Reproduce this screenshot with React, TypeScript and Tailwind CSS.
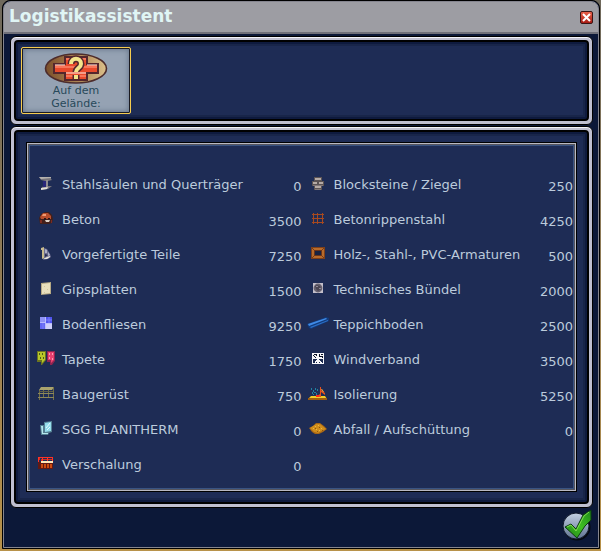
import type { ReactNode } from "react";

interface Material {
  name: string;
  amount: number;
  icon: ReactNode;
}

// even width and odd height keep the sprite on whole pixels inside its cell
function Sprite({ w, h, children }: { w: number; h: number; children: ReactNode }) {
  const width = w + (w % 2);
  const height = h + ((h + 1) % 2);
  return (
    <svg
      width={width}
      height={height}
      viewBox={`0 0 ${width} ${height}`}
      className="mx-auto block"
      aria-hidden="true"
    >
      {children}
    </svg>
  );
}

/* ─── Material icons ────────────────────────────────────────────────────── */
const BeamIcon = (
  <Sprite w={13} h={13}>
    <path d="M0 0h12v2l1 1-4 1v5h4l-4 3-7 1 1-3 3-1V4L2 3z" fill="#77747a" />
    <path d="M0 0h12v1l-10 1z" fill="#b5b2ae" />
    <path d="M4 4h3v6H4z" fill="#29277a" />
    <path d="M7 3h2v7H7z" fill="#8f8d90" />
    <path d="M2 11l7-1-1 2-6 1z" fill="#e4e1da" />
  </Sprite>
);

const ConcreteIcon = (
  <Sprite w={14} h={12}>
    <path d="M0 6l2-4 4-2h4l3 3 1 4-1 4-3 1H1z" fill="#42201c" />
    <path d="M1 5l3-4h5l3 3v3H2z" fill="#b94e2c" />
    <path d="M4 2h3v2H3z" fill="#f29a70" />
    <path d="M6 8h5l-1 2H7z" fill="#ded2c8" />
    <path d="M5 6h2v2H5zM9 6h2v1H9z" fill="#2b1718" />
    <path d="M1 8h2v3H1zM12 8h1v3h-1z" fill="#7d2b20" />
  </Sprite>
);

const PrefabIcon = (
  <Sprite w={10} h={13}>
    <path d="M0 1l3-1v11l-2 1V3L0 3z" fill="#c8ba8c" />
    <path d="M3 1l3 1 3 5 1 3-3 2-5 1 1-2z" fill="#6d6e90" />
    <path d="M4 2l2 1v3L4 6zM7 5l2 3-2 1z" fill="#aeb0c8" />
    <path d="M2 12l4-2 3-1v1l-3 2z" fill="#e6e2d8" />
    <path d="M4 7l3 1-3 2z" fill="#252a4c" />
  </Sprite>
);

const PlasterIcon = (
  <Sprite w={10} h={13}>
    <path d="M0 1l10-1v12L0 13z" fill="#b7aa85" />
    <path d="M1 2l8-1v10l-8 1z" fill="#e8dfbd" />
    <path d="M3 4h1v1H3zM6 7h1v1H6zM3 10h1v1H3z" fill="#d2c69f" />
  </Sprite>
);

const TilesIcon = (
  <Sprite w={12} h={12}>
    <path d="M0 0h12v12H0z" fill="#b9bbff" />
    <path d="M0 0h5v5H0z" fill="#8f93f6" />
    <path d="M6 0h6v6H6z" fill="#5054ee" />
    <path d="M0 6h5v6H0z" fill="#6468f4" />
    <path d="M6 7h6v5H6z" fill="#cfd0fa" />
    <path d="M9 0v6M6 3h6M3 6v6" stroke="#7b7ff8" />
  </Sprite>
);

const WallpaperIcon = (
  <Sprite w={18} h={14}>
    <path d="M0 0h9v9l-4 5H4v-3H0z" fill="#6b7420" />
    <path d="M10 0h8v10l-3 4h-2v-3h-3z" fill="#8f2450" />
    <path d="M1 1h7v8l-3 3V9H1z" fill="#b8c72a" />
    <path d="M11 1h6v8l-3 3V9h-3z" fill="#e8406f" />
    <path d="M2 2h1v2H2zM5 2h1v2H5zM3 6h1v2H3zM6 6h1v2H6z" fill="#4f5a1c" />
    <path d="M12 2h1v2h-1zM15 2h1v2h-1zM12 6h1v2h-1zM15 7h1v2h-1z" fill="#ff9ab5" />
  </Sprite>
);

const ScaffoldIcon = (
  <Sprite w={16} h={13}>
    <path d="M3 0h13l-2 3H1z" fill="#aaa36d" />
    <path d="M1 3h1v10H1zM5 3h1v8H5zM10 3h1v8h-1zM15 0h1v13h-1z" fill="#747047" />
    <path d="M0 6h16v1H0zM0 10h16v1H0z" fill="#8d8859" />
    <path d="M1 4h14v1H1z" fill="#5f5d45" />
  </Sprite>
);

const GlassIcon = (
  <Sprite w={12} h={14}>
    <path d="M0 4h4V1l8-1v11l-3 1-1 2H1z" fill="#557f92" />
    <path d="M5 2l6-1v9l-6 1z" fill="#94ddec" />
    <path d="M1 5h2v7h5v1H2z" fill="#b6e8ee" />
    <path d="M6 7l4-5M7 9l3-3" stroke="#e6fbff" />
  </Sprite>
);

const FormworkIcon = (
  <Sprite w={15} h={12}>
    <path d="M0 5h15v7H0z" fill="#631912" />
    <path d="M0 0h15v1H0zM0 0h1v5H0zM4 0h1v4H4zM9 0h1v4H9zM14 0h1v5h-1z" fill="#ff3325" />
    <path d="M1 1h1v2H1zM3 2h1v2H3zM5 2h4v1H5zM10 2h4v1h-4z" fill="#d82a20" />
    <path d="M3 4h12v2H3z" fill="#ffe9bb" />
    <path d="M3 7h2v4H3zM6 7h2v4H6zM9 7h2v4H9zM12 7h2v4h-2z" fill="#cc4a10" />
  </Sprite>
);

const BlocksIcon = (
  <Sprite w={12} h={13}>
    <path d="M2 0h8v4h2v5h-2v4H2V9H0V4h2z" fill="#5b5354" />
    <path d="M3 1h6v2H3zM1 5h4v2H1zM7 5h4v2H7zM3 9h6v2H3z" fill="#b5aaa5" />
    <path d="M3 12h6v1H3zM1 8h10v1H1z" fill="#81777a" />
  </Sprite>
);

const RebarIcon = (
  <Sprite w={12} h={11}>
    <path
      d="M1 0h1v11H1zM5 0h1v11H5zM10 0h1v11h-1zM0 1h12v1H0zM0 5h12v1H0zM0 9h12v1H0z"
      fill="#a8491f"
      shapeRendering="crispEdges"
    />
  </Sprite>
);

const FrameIcon = (
  <Sprite w={14} h={12}>
    <path d="M0 0h14v12H0z" fill="#804018" />
    <path d="M1 1h12v10H1z" fill="#b86b2b" />
    <path d="M1 1l3 3M13 1l-3 3M1 11l3-3M13 11l-3-3" stroke="#773c18" />
    <path d="M3 3h8v6H3z" fill="#6c3519" />
    <path d="M4 4h6v4H4z" fill="#182342" />
  </Sprite>
);

const BundleIcon = (
  <Sprite w={10} h={10}>
    <path d="M0 0h10v10H0z" fill="#c3bfca" />
    <circle cx="5" cy="5" r="4.4" fill="#66616f" />
    <path d="M2 3l2-1 3 1 1 3-3 2-2-2z" fill="#4a4552" />
    <path d="M3 3h2v1H3zM6 5h2v1H6z" fill="#8f8998" />
  </Sprite>
);

const CarpetIcon = (
  <Sprite w={22} h={12}>
    <path d="M0 7L19 0l3 1v3L4 12l-2-1z" fill="#123a7b" />
    <path d="M1 7L19 1l1 1L2 9z" fill="#3f8ae6" />
    <path d="M3 10l18-7v1L4 11z" fill="#2d70c7" />
  </Sprite>
);

const WindowIcon = (
  <Sprite w={12} h={11}>
    <path d="M0 0h12v11H0z" fill="#f6f6fa" />
    <path
      d="M2 1h3v1H2zM4 2h1v1H4zM1 2h1v1H1zM2 3h1v1H2zM3 4h1v1H3zM7 1h1v3H7zM9 1h2v1H9zM8 3h2v1H8zM10 3h1v2h-1z"
      fill="#0c1226"
    />
    <path
      d="M1 6h4v1H1zM1 7h3v1H1zM1 8h2v2H1zM4 9h1v1H4zM7 6h4v1H7zM8 7h3v1H8zM7 9h1v1H7zM9 8h2v1H9zM10 9h1v1h-1z"
      fill="#1b294f"
    />
  </Sprite>
);

const InsulationIcon = (
  <Sprite w={19} h={13}>
    <path d="M3 9h14l2 3H0z" fill="#f0cc28" />
    <path d="M0 11h19v2H0z" fill="#9f5e0e" />
    <path
      d="M3 1h1v2H3zM5 3h1v2H5zM7 1h1v2H7zM9 2h1v2H9zM4 5h1v2H4zM6 5h2v1H6zM8 6h1v2H8zM5 7h1v1H5z"
      fill="#1f83a2"
    />
    <path d="M9 9l3-2V0h1v3l4 3v2l-4-3v5H9z" fill="#e8501e" />
    <path d="M13 2h1l2 3h-1z" fill="#ffb13a" />
    <path d="M8 8h3v2H8z" fill="#ff2a1a" />
  </Sprite>
);

const RubbleIcon = (
  <Sprite w={18} h={11}>
    <path d="M0 5l4-2 3-3h4l4 3 3 3-4 3-4 2H6L3 9z" fill="#a76615" />
    <path d="M1 5l6-4h4l6 5-4 2-4 2-4-1z" fill="#cf8d1c" />
    <path d="M6 3h1v1H6zM9 2h1v1H9zM12 5h1v1h-1zM7 6h1v1H7zM4 5h1v1H4zM10 7h1v1h-1z" fill="#efb83c" />
    <path d="M6 5h1v1H6zM10 4h1v1h-1zM8 8h1v1H8zM13 7h1v1h-1z" fill="#8c5510" />
  </Sprite>
);

const ROWS: [Material, Material?][] = [
  [
    { name: "Stahlsäulen und Querträger", amount: 0, icon: BeamIcon },
    { name: "Blocksteine / Ziegel", amount: 250, icon: BlocksIcon },
  ],
  [
    { name: "Beton", amount: 3500, icon: ConcreteIcon },
    { name: "Betonrippenstahl", amount: 4250, icon: RebarIcon },
  ],
  [
    { name: "Vorgefertigte Teile", amount: 7250, icon: PrefabIcon },
    { name: "Holz-, Stahl-, PVC-Armaturen", amount: 500, icon: FrameIcon },
  ],
  [
    { name: "Gipsplatten", amount: 1500, icon: PlasterIcon },
    { name: "Technisches Bündel", amount: 2000, icon: BundleIcon },
  ],
  [
    { name: "Bodenfliesen", amount: 9250, icon: TilesIcon },
    { name: "Teppichboden", amount: 2500, icon: CarpetIcon },
  ],
  [
    { name: "Tapete", amount: 1750, icon: WallpaperIcon },
    { name: "Windverband", amount: 3500, icon: WindowIcon },
  ],
  [
    { name: "Baugerüst", amount: 750, icon: ScaffoldIcon },
    { name: "Isolierung", amount: 5250, icon: InsulationIcon },
  ],
  [
    { name: "SGG PLANITHERM", amount: 0, icon: GlassIcon },
    { name: "Abfall / Aufschüttung", amount: 0, icon: RubbleIcon },
  ],
  [{ name: "Verschalung", amount: 0, icon: FormworkIcon }],
];

function MaterialCells({ item }: { item: Material }) {
  return (
    <>
      <td className="p-0 pb-[2px]">{item.icon}</td>
      <th scope="row" className="p-0 text-left font-normal whitespace-nowrap">
        {item.name}
      </th>
      <td className="p-0 pt-1 text-right">{item.amount}</td>
    </>
  );
}

/* ─── Metal frame round a panel ─────────────────────────────────────────── */
function Panel({ children }: { children: ReactNode }) {
  return (
    <section className="rounded-md border border-black bg-[#bfbfd0] p-[3px] shadow-[inset_0_1px_0_#f4f4fa]">
      <div className="rounded-sm border-2 border-black bg-[#1e2c55] shadow-[inset_0_0_0_2px_#0e1a3e,inset_0_0_0_4px_#182549]">
        {children}
      </div>
    </section>
  );
}

function SiteIcon() {
  return (
    <svg width="64" height="31" viewBox="0 0 64 31" aria-hidden="true">
      <defs>
        <linearGradient id="wood" x1="0" x2="1">
          <stop offset="0" stopColor="#7a4f2a" />
          <stop offset=".5" stopColor="#a98050" />
          <stop offset="1" stopColor="#dcc08a" />
        </linearGradient>
      </defs>
      <ellipse cx="32" cy="15.5" rx="30.5" ry="14.5" fill="url(#wood)" stroke="#4d2c2c" strokeWidth="1.6" />
      <path d="M21 4h22v7h11v9H43v7H21v-7H10v-9h11z" fill="#e84a2c" stroke="#54262c" strokeWidth="2" />
      <path d="M11 14h42M22 6h20M22 23h20" stroke="#f7765a" strokeWidth="2" />
      <path d="M11 12h10M43 12h10M22 20h20" stroke="#fff0e8" />
      <path
        d="M27 11c0-7 10-7 10 0 0 4-5 4-5 8M32 22v4"
        fill="none"
        stroke="#54262c"
        strokeWidth="7"
        strokeLinejoin="round"
      />
      <path d="M27 11c0-7 10-7 10 0 0 4-5 4-5 8M32 22v4" fill="none" stroke="#f3e48b" strokeWidth="4" />
    </svg>
  );
}

function ConfirmIcon() {
  return (
    <svg width="32" height="34" viewBox="0 0 32 34" className="block" aria-hidden="true">
      <defs>
        <linearGradient id="disc" x1="0" y1="0" x2="0" y2="1">
          <stop offset="0" stopColor="#c3d0e2" />
          <stop offset="1" stopColor="#5f7290" />
        </linearGradient>
        <linearGradient id="tick" x1="1" y1="0" x2="0" y2="1">
          <stop offset="0" stopColor="#1f8a1a" />
          <stop offset=".5" stopColor="#3fbf22" />
          <stop offset="1" stopColor="#1c7a16" />
        </linearGradient>
      </defs>
      <circle cx="15" cy="18" r="13.5" fill="#05090f" />
      <circle cx="14" cy="17" r="13" fill="url(#disc)" stroke="#10182a" />
      <path d="M3 18l6-3 5 5L21 6l8-5v10L23 17 15 29z" fill="url(#tick)" stroke="#0b3d0e" />
      <path d="M5 18l4-2 5 6 8-15 5-4" fill="none" stroke="#7fdc50" />
    </svg>
  );
}

export default function App() {
  return (
    <div className="min-h-screen bg-linear-to-b from-[#6f695c] to-[#b8924a] pr-px pb-[2px] pl-[2px] font-['DejaVu_Sans',sans-serif]">
      <main className="rounded-t-lg border border-black bg-[#0c1838]">
        <div className="rounded-t-lg border border-[#85858f]">
          <header className="flex h-8 items-center justify-between rounded-t-md border-b-2 border-[#707079] bg-[#9d9da3] px-[5px]">
            <h1 className="text-[17px] font-bold text-[#e0f5f5]">Logistikassistent</h1>
            <button
              type="button"
              aria-label="Schließen"
              className="flex size-[13px] items-center justify-center rounded-xs border border-[#3b1515] bg-linear-to-b from-[#e8604a] to-[#a81a14]"
            >
              <svg width="9" height="9" viewBox="0 0 9 9" aria-hidden="true">
                <path d="M1 1l7 7M8 1L1 8" stroke="#fff" strokeWidth="2" />
              </svg>
            </button>
          </header>

          <div className="pt-[2px] pr-[5px] pl-[6px]">
            <Panel>
              <div className="p-[5px]">
                <button
                  type="button"
                  className="flex h-[67px] w-[110px] flex-col items-center rounded-xs border border-[#f5cc4f] bg-[#95a2b3] pt-[5px] text-[11px] leading-[13px] text-[#28495a] shadow-[inset_0_0_0_1px_#1a1a20,inset_0_0_5px_2px_#6d7c90]"
                >
                  <SiteIcon />
                  <span>
                    Auf dem
                    <br />
                    Gelände:
                  </span>
                </button>
              </div>
            </Panel>

            <div className="mt-px">
              <Panel>
                <div className="p-[10px]">
                  <div className="border border-black bg-[#55555f]">
                    <div className="border border-[#b9b9c2] p-px">
                      <div className="border border-[#395382] bg-[#1e2c55] pt-[21px] pb-[6px]">
                        <table className="w-full table-fixed text-[13px] leading-4 text-[#bccbdc]">
                          <colgroup>
                            <col className="w-8" />
                            <col />
                            <col className="w-10" />
                            <col className="w-8" />
                            <col />
                            <col className="w-10" />
                          </colgroup>
                          <tbody>
                            {ROWS.map(([left, right]) => (
                              <tr key={left.name} className="h-[35px]">
                                <MaterialCells item={left} />
                                {right && <MaterialCells item={right} />}
                              </tr>
                            ))}
                          </tbody>
                        </table>
                      </div>
                    </div>
                  </div>
                </div>
              </Panel>
            </div>
          </div>

          <footer className="flex justify-end px-1 pt-px pb-1">
            <button type="button" aria-label="Bestätigen">
              <ConfirmIcon />
            </button>
          </footer>
        </div>
      </main>
    </div>
  );
}
